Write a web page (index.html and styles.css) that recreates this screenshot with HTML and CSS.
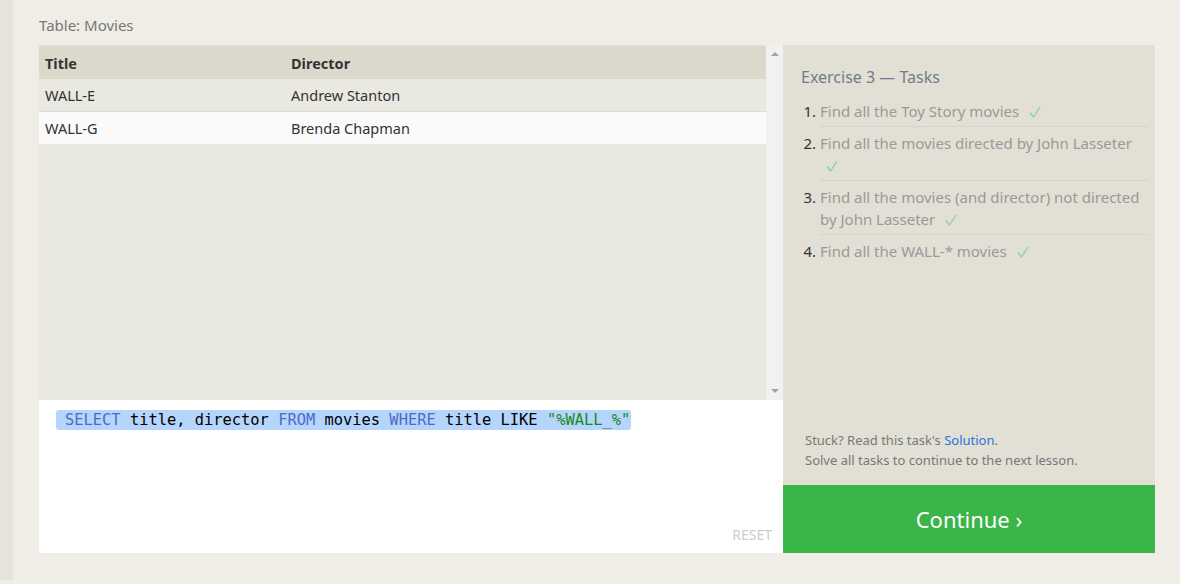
FILE: index.html
```html
<!DOCTYPE html>
<html>
<head>
<meta charset="utf-8">
<link rel="stylesheet" href="styles.css">
</head>
<body>
<div class="page">
  <div class="label">Table: Movies</div>
  <div class="main">
    <div class="left">
      <div class="results">
        <div class="table-wrap">
          <table class="tbl">
            <thead>
              <tr><th class="c1">Title</th><th>Director</th></tr>
            </thead>
            <tbody>
              <tr class="odd"><td class="c1">WALL-E</td><td>Andrew Stanton</td></tr>
              <tr class="even"><td class="c1">WALL-G</td><td>Brenda Chapman</td></tr>
            </tbody>
          </table>
        </div>
        <div class="scrollbar">
          <span class="arrow up"></span>
          <span class="arrow down"></span>
        </div>
      </div>
      <div class="editor">
        <div class="code"><span class="sel"><span class="kw">SELECT</span> title, director <span class="kw">FROM</span> movies <span class="kw">WHERE</span> title LIKE <span class="str">"%WALL_%"</span></span></div>
        <div class="reset">RESET</div>
      </div>
    </div>
    <div class="right">
      <div class="tasks">
        <h2 class="title">Exercise 3 — Tasks</h2>
        <ol class="list">
          <li>Find all the Toy Story movies <svg class="check" viewBox="0 0 12 12"><polyline points="1,6.5 4.5,11 11,1"/></svg></li>
          <li>Find all the movies directed by John Lasseter <svg class="check" viewBox="0 0 12 12"><polyline points="1,6.5 4.5,11 11,1"/></svg></li>
          <li>Find all the movies (and director) not directed by John Lasseter <svg class="check" viewBox="0 0 12 12"><polyline points="1,6.5 4.5,11 11,1"/></svg></li>
          <li class="last">Find all the WALL-* movies <svg class="check" viewBox="0 0 12 12"><polyline points="1,6.5 4.5,11 11,1"/></svg></li>
        </ol>
      </div>
      <div class="hint">
        <div>Stuck? Read this task's <a class="link">Solution</a>.</div>
        <div>Solve all tasks to continue to the next lesson.</div>
      </div>
      <div class="continue">Continue ›</div>
    </div>
  </div>
</div>
</body>
</html>
```

FILE: styles.css
```css
html, body {
  margin: 0;
  padding: 0;
}
body {
  background: #f0ede6;
  font-family: "Noto Sans", "Open Sans", sans-serif;
  height: 584px;
  overflow: hidden;
}
.page {
  margin-left: 13px;
  height: 580px;
  padding: 15px 25px 0 26px;
  box-sizing: border-box;
  background: #f0ede6;
  box-shadow: -13px 0 0 #e6e2dd;
}
.label {
  font-size: 15px;
  line-height: 20px;
  color: #777;
  margin-bottom: 10px;
}
.main {
  display: flex;
  height: 508px;
}
.left {
  width: 744px;
  display: flex;
  flex-direction: column;
}
.results {
  height: 355px;
  display: flex;
  background: #eae9e1;
  box-shadow: inset 0 1px 0 #e6e5dc;
}
.table-wrap {
  flex: 1;
  padding-top: 1px;
}
.tbl {
  width: 100%;
  border-collapse: collapse;
  font-size: 14.5px;
  color: #333;
}
.tbl th {
  text-align: left;
  background: #dad9cc;
  height: 33px;
  padding: 0 6px;
  font-weight: bold;
  color: #333;
}
.tbl td {
  height: 32px;
  padding: 0 6px;
}
.tbl .c1 {
  width: 234px;
}
.tbl tr.odd td {
  background: #eae9e1;
  border-bottom: 1px solid #dcdbd4;
}
.tbl tr.even td {
  background: #fafafa;
}
.scrollbar {
  width: 17px;
  background: #f1f1f1;
  display: flex;
  flex-direction: column;
  justify-content: space-between;
  align-items: center;
  padding: 7px 0 7px;
  box-sizing: border-box;
}
.arrow {
  width: 0;
  height: 0;
  border-left: 4px solid transparent;
  border-right: 4px solid transparent;
}
.arrow.up {
  border-bottom: 4px solid #a3a3a3;
}
.arrow.down {
  border-top: 4px solid #a3a3a3;
}
.editor {
  flex: 1;
  background: #fff;
  display: flex;
  flex-direction: column;
  justify-content: space-between;
  padding: 10px 11px 9px 17px;
}
.code {
  font-family: "DejaVu Sans Mono", monospace;
  font-size: 15.4px;
  line-height: 20px;
  color: #000;
}
.sel {
  background: #b5d5fc;
  border-radius: 3px;
  padding: 0 1px 0 9px;
  display: inline-block;
}
.kw {
  color: #4d6bc6;
}
.str {
  color: #1a8a1a;
}
.reset {
  align-self: flex-end;
  font-size: 14px;
  color: #cccccc;
  line-height: 18px;
}
.right {
  width: 372px;
  background: #e2e0d5;
  display: flex;
  flex-direction: column;
}
.tasks {
  flex: 1;
  padding: 21px 7px 0 18px;
}
.title {
  margin: 0 0 7px 0;
  font-size: 16px;
  line-height: 22px;
  font-weight: normal;
  color: #707c8c;
}
.list {
  margin: 0;
  padding-left: 19px;
  font-size: 15px;
  line-height: 22px;
  color: #999;
}
.list li {
  padding: 5px 0 4px;
  border-bottom: 1px solid #d6d4c9;
}
.list li.last {
  border-bottom: 0;
}
.list li::marker {
  color: #333;
}
.check {
  width: 12px;
  height: 12px;
  margin-left: 6px;
  vertical-align: -1px;
  fill: none;
  stroke: #8fd19e;
  stroke-width: 1.3;
}
.hint {
  padding: 0 10px 15px 22px;
  font-size: 13px;
  line-height: 20px;
  color: #777;
}
.link {
  color: #2a72d8;
}
.continue {
  height: 68px;
  background: #3ab54a;
  color: #fff;
  font-size: 22px;
  display: flex;
  align-items: center;
  justify-content: center;
}
```
